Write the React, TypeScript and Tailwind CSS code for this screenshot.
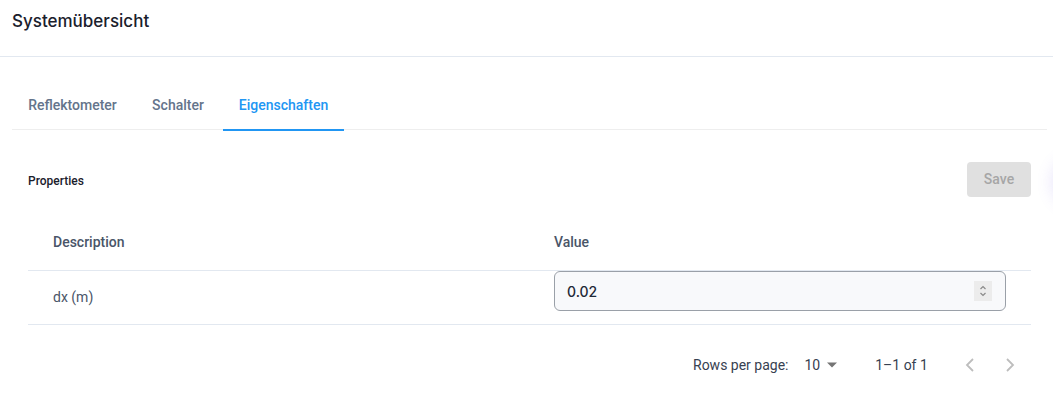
import React from "react";

export default function App() {
  return (
    <div className="relative w-[1053px] h-[409px] overflow-hidden bg-white" style={{ fontFamily: "Roboto, 'Liberation Sans', sans-serif" }}>
      <header className="h-[57px] border-b border-[#e2e8f0] pl-3 pt-[10px]">
        <h1 className="text-[17px] leading-[22px] font-medium text-[#1a202c]" style={{ fontFamily: "Inter, Roboto, sans-serif" }}>Systemübersicht</h1>
      </header>
      <main className="pl-3 pr-[6px] pt-6">
        <div className="flex h-[49px] border-b border-[#eeeeee]">
          <div className="w-[121px] h-[48px] flex items-center justify-center text-[14px] font-medium text-[#64748b]">Reflektometer</div>
          <div className="w-[90px] h-[48px] flex items-center justify-center text-[14px] font-medium text-[#64748b]">Schalter</div>
          <div className="w-[121px] h-[48px] flex items-center justify-center text-[14px] font-medium text-[#2196f3] border-b-2 border-[#2196f3] box-content">Eigenschaften</div>
        </div>
        <div className="px-4 pt-[32px]">
          <div className="flex items-center justify-between h-[35px]">
            <span className="text-[12px] font-medium text-[#1a202c] pt-[2px]">Properties</span>
            <button className="w-[64px] h-[35px] rounded-[4px] bg-[#e0e0e0] text-[14px] font-medium text-[#a6a6a6]">Save</button>
          </div>
          <div className="mt-[18px]">
            <div className="flex h-[56px] items-center border-b border-[#e2e8f0] text-[14px] font-medium text-[#4a5568]">
              <div className="w-[526px] pl-[25px]">Description</div>
              <div>Value</div>
            </div>
            <div className="flex h-[54px] border-b border-[#e2e8f0] text-[14px] text-[#4a5568]">
              <div className="w-[526px] pl-[25px] flex items-center">dx (m)</div>
              <div className="w-[452px] h-[40px] rounded-[6px] border border-[#9aa0a8] bg-[#f8f9fb] flex items-center justify-between pl-[12px] pr-[13px]">
                <span className="text-[14px] font-medium text-[#1f2937]" style={{ fontFamily: "Inter, Roboto, sans-serif" }}>0.02</span>
                <div className="w-[18px] h-[20px] bg-[#ececec] flex items-center justify-center">
                  <svg width="10" height="14" viewBox="0 0 10 14" fill="none" stroke="#8a8a8a" strokeWidth="1.2">
                    <path d="M2.5 5 L5 2.5 L7.5 5" />
                    <path d="M2.5 9 L5 11.5 L7.5 9" />
                  </svg>
                </div>
              </div>
            </div>
          </div>
          <div className="flex items-center h-[80px] text-[14px] text-[#374151]">
            <div className="ml-[665px]">Rows per page:</div>
            <div className="ml-[16px] flex items-center">
              <span>10</span>
              <svg className="ml-[7px]" width="10" height="6" viewBox="0 0 10 5"><path d="M0 0 L10 0 L5 5 Z" fill="#757575" /></svg>
            </div>
            <div className="ml-[38px]">1–1 of 1</div>
            <div className="ml-[30px] flex items-center gap-[16px]">
              <svg width="24" height="24" viewBox="0 0 24 24" fill="none" stroke="#bdbdbd" strokeWidth="1.8"><path d="M15 6 L9 12 L15 18" /></svg>
              <svg width="24" height="24" viewBox="0 0 24 24" fill="none" stroke="#bdbdbd" strokeWidth="1.8"><path d="M9 6 L15 12 L9 18" /></svg>
            </div>
          </div>
        </div>
      </main>
      <div className="absolute left-[1056px] top-[160px] w-[44px] h-[44px] rounded-full bg-white shadow-[0_0_16px_4px_rgba(120,100,230,0.18)]" />
    </div>
  );
}
